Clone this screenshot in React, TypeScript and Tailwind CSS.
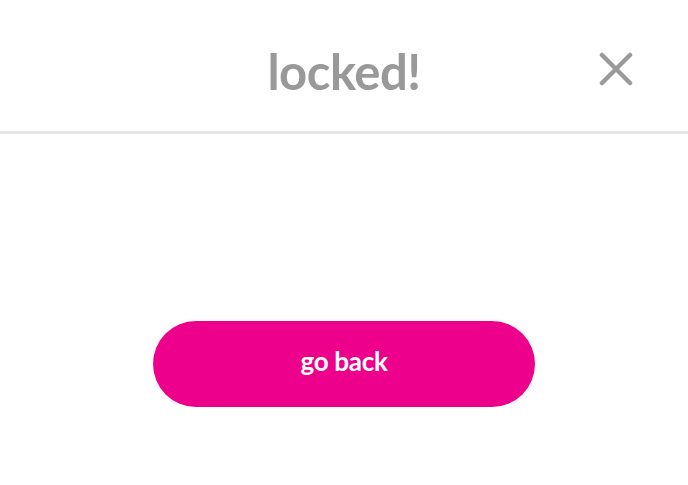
import React from "react";

const CloseIcon: React.FC = () => (
  <svg width="34" height="34" viewBox="0 0 34 34" fill="none">
    <path
      d="M3 3 L31 31 M31 3 L3 31"
      stroke="#9a9a9a"
      strokeWidth="4.5"
      strokeLinecap="round"
    />
  </svg>
);

const App: React.FC = () => {
  return (
    <div className="h-[485px] w-full bg-white font-['Lato',sans-serif]">
      {/* header */}
      <div className="relative flex h-[134px] items-center justify-center border-b-[3px] border-[#e6e6e6] pt-[12px]">
        <h1 className="text-[49px] font-bold leading-none tracking-[-0.5px] text-[#999999]">
          locked!
        </h1>
        <button className="absolute right-[55px] top-[52px]">
          <CloseIcon />
        </button>
      </div>

      <div className="flex justify-center pt-[187px]">
        <button className="flex h-[86px] w-[382px] items-center justify-center rounded-full bg-[#ec008c] pb-[5px] text-[26px] font-bold tracking-[-0.3px] text-white">
          go back
        </button>
      </div>
    </div>
  );
};

export default App;
